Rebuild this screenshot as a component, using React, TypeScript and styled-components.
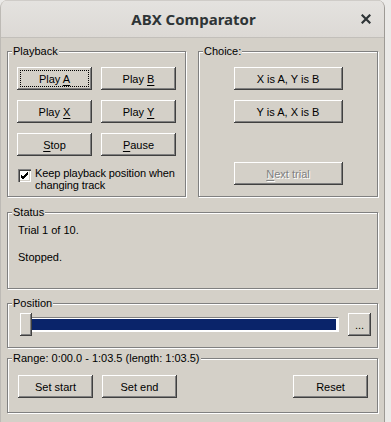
import React from "react";
import styled, { createGlobalStyle } from "styled-components";

const GlobalStyle = createGlobalStyle`
  html, body {
    margin: 0;
    padding: 0;
    background: #ebeae8;
  }
  * {
    box-sizing: border-box;
  }
`;

const Window = styled.div`
  width: 385px;
  height: 422px;
  display: flex;
  flex-direction: column;
  background: #d4d0c8;
  border-right: 1px solid #9d9a95;
  border-left: 1px solid #bdbab5;
  border-radius: 8px 8px 0 0;
  overflow: hidden;
  font-family: "Liberation Sans", Arial, sans-serif;
  font-size: 11px;
  color: #000;
`;

const TitleBar = styled.div`
  height: 38px;
  flex: none;
  display: flex;
  align-items: center;
  justify-content: center;
  position: relative;
  background: linear-gradient(#e4e2df, #dcd9d5);
  border-bottom: 1px solid #c2bfba;
  border-top: 1px solid #cfccc8;
`;

const Title = styled.div`
  font-family: "Noto Sans", "Open Sans", sans-serif;
  font-weight: 700;
  font-size: 15px;
  color: #2e3436;
  padding-left: 2px;
`;

const CloseButton = styled.button`
  position: absolute;
  right: 13px;
  top: 13px;
  width: 10px;
  height: 10px;
  padding: 0;
  border: none;
  background: transparent;
  display: flex;
`;

const Body = styled.div`
  flex: 1;
  padding: 7px 6px 0 6px;
  display: flex;
  flex-direction: column;
`;

const TopRow = styled.div`
  display: grid;
  grid-template-columns: 179px 180px;
  column-gap: 12px;
`;

const Group = styled.fieldset<{ $h: number; $mt?: number }>`
  margin: ${(p) => p.$mt ?? 0}px 0 0 0;
  padding: 0;
  min-width: 0;
  height: ${(p) => p.$h}px;
  border: 1px solid #808080;
  box-shadow: inset 1px 1px 0 #fff, 1px 1px 0 #fff;
  position: relative;
`;

const Legend = styled.legend`
  margin-left: 4px;
  padding: 0 1px;
  line-height: 13px;
  background: #d4d0c8;
`;

const ButtonGrid = styled.div`
  display: grid;
  grid-template-columns: 75px 75px;
  column-gap: 9px;
  row-gap: 10px;
  padding: 9px 0 0 9px;
`;

const Button = styled.button<{ $w?: number; $focus?: boolean }>`
  width: ${(p) => p.$w ?? 75}px;
  height: 23px;
  padding: 0;
  border: none;
  background: #d4d0c8;
  font-family: inherit;
  font-size: 11px;
  color: ${(p) => (p.disabled ? "#808080" : "#000")};
  text-shadow: ${(p) => (p.disabled ? "1px 1px 0 #fff" : "none")};
  box-shadow: inset -1px -1px 0 #404040, inset 1px 1px 0 #fff,
    inset -2px -2px 0 #808080;
  outline: ${(p) => (p.$focus ? "1px dotted #000" : "none")};
  outline-offset: -4px;
  flex: none;
  u {
    text-decoration: underline;
    text-underline-offset: 2px;
  }
`;

const CheckRow = styled.label`
  display: flex;
  align-items: flex-start;
  gap: 4px;
  margin: 11px 0 0 10px;
  line-height: 12px;
  letter-spacing: -0.1px;
`;

const CheckBox = styled.span`
  width: 13px;
  height: 13px;
  flex: none;
  margin-top: 2px;
  background: #fff;
  box-shadow: inset 1px 1px 0 #808080, inset 2px 2px 0 #404040,
    inset -1px -1px 0 #fff, inset -2px -2px 0 #d4d0c8;
  display: flex;
  align-items: center;
  justify-content: center;
`;

const ChoiceColumn = styled.div`
  display: flex;
  flex-direction: column;
  align-items: center;
  gap: 10px;
  padding-top: 9px;
`;

const Spacer = styled.div`
  height: 19px;
`;

const StatusText = styled.div`
  padding: 5px 0 0 10px;
  display: flex;
  flex-direction: column;
  gap: 14px;
  line-height: 13px;
`;

const SliderRow = styled.div`
  display: flex;
  align-items: center;
  padding: 3px 6px 0 12px;
`;

const Thumb = styled.div`
  width: 12px;
  height: 23px;
  flex: none;
  background: #d4d0c8;
  box-shadow: inset -1px -1px 0 #404040, inset 1px 1px 0 #fff,
    inset -2px -2px 0 #808080;
`;

const Track = styled.div`
  flex: 1;
  height: 15px;
  margin-right: 9px;
  border-top: 1px solid #808080;
  border-bottom: 1px solid #fff;
  border-right: 1px solid #fff;
  padding: 1px 2px 1px 0;
  background: #fff;
  display: flex;
`;

const Fill = styled.div`
  flex: 1;
  background: #0a246a;
`;

const RangeRow = styled.div`
  display: flex;
  align-items: center;
  padding: 10px 9px 0 10px;
  gap: 9px;
`;

const Grow = styled.div`
  flex: 1;
`;

const CheckMark = () => (
  <svg width="9" height="9" viewBox="0 0 9 9">
    <path
      d="M1 4 L3 6 L8 1 M1 5 L3 7 L8 2 M1 6 L3 8 L8 3"
      stroke="#000"
      strokeWidth="1"
      fill="none"
    />
  </svg>
);

export default function App() {
  return (
    <>
      <GlobalStyle />
      <Window>
        <TitleBar>
          <Title>ABX Comparator</Title>
          <CloseButton aria-label="Close">
            <svg width="10" height="10" viewBox="0 0 10 10">
              <path
                d="M1.5 1.5 L8.5 8.5 M8.5 1.5 L1.5 8.5"
                stroke="#2e3436"
                strokeWidth="2.2"
                strokeLinecap="square"
              />
            </svg>
          </CloseButton>
        </TitleBar>
        <Body>
          <TopRow>
            <Group $h={152}>
              <Legend>Playback</Legend>
              <ButtonGrid>
                <Button $focus>
                  Play <u>A</u>
                </Button>
                <Button>
                  Play <u>B</u>
                </Button>
                <Button>
                  Play <u>X</u>
                </Button>
                <Button>
                  Play <u>Y</u>
                </Button>
                <Button>
                  <u>S</u>top
                </Button>
                <Button>
                  <u>P</u>ause
                </Button>
              </ButtonGrid>
              <CheckRow>
                <CheckBox>
                  <CheckMark />
                </CheckBox>
                <span>
                  Keep playback position when
                  <br />
                  changing track
                </span>
              </CheckRow>
            </Group>
            <Group $h={152}>
              <Legend>Choice:</Legend>
              <ChoiceColumn>
                <Button $w={109}>X is A, Y is B</Button>
                <Button $w={109}>Y is A, X is B</Button>
                <Spacer />
                <Button $w={109} disabled>
                  <u>N</u>ext trial
                </Button>
              </ChoiceColumn>
            </Group>
          </TopRow>
          <Group $h={83} $mt={9}>
            <Legend>Status</Legend>
            <StatusText>
              <div>Trial 1 of 10.</div>
              <div>Stopped.</div>
            </StatusText>
          </Group>
          <Group $h={51} $mt={8}>
            <Legend>Position</Legend>
            <SliderRow>
              <Thumb />
              <Track>
                <Fill />
              </Track>
              <Button $w={23}>...</Button>
            </SliderRow>
          </Group>
          <Group $h={61} $mt={4}>
            <Legend>Range: 0:00.0 - 1:03.5 (length: 1:03.5)</Legend>
            <RangeRow>
              <Button>Set start</Button>
              <Button>Set end</Button>
              <Grow />
              <Button>Reset</Button>
            </RangeRow>
          </Group>
        </Body>
      </Window>
    </>
  );
}
